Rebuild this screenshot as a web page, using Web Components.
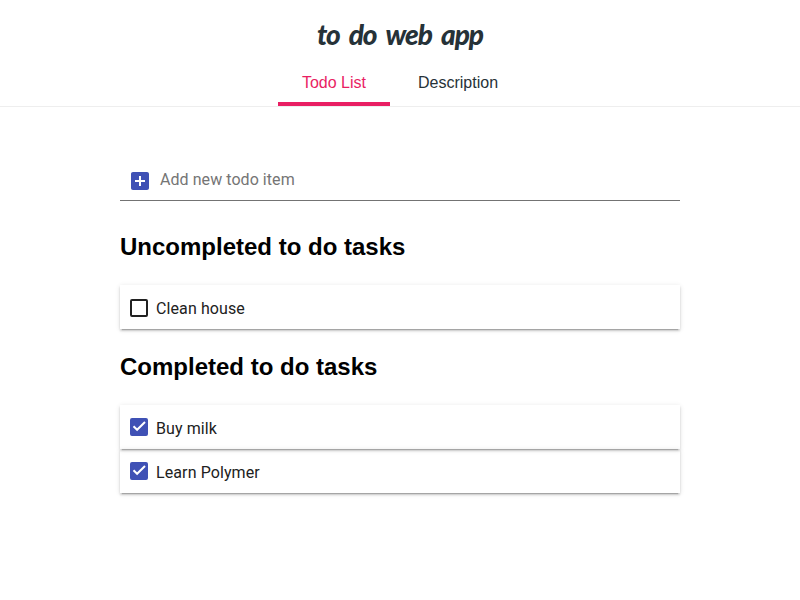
<!DOCTYPE html>
<html lang="en">
<head>
<meta charset="utf-8">
<title>to do web app</title>
<style>body{margin:0;min-height:100vh;background:#fff;font-family:"Liberation Sans",Arial,sans-serif}</style>
</head>
<body>
<todo-app></todo-app>
<script>
const define = (name, html) => customElements.define(name, class extends HTMLElement {
  constructor() {
    super();
    const t = document.createElement('template');
    t.innerHTML = html;
    this.attachShadow({mode: 'open'}).append(t.content.cloneNode(true));
  }
});

define('app-tab', `<style>
:host{display:block;box-sizing:border-box;height:46px;padding:13px 24px 0;font-size:16px;line-height:19px;color:#263238;border-bottom:4px solid transparent;white-space:nowrap}
:host([active]){color:#e91e63;border-color:#e91e63}
</style><slot></slot>`);

define('app-header', `<style>
:host{display:flex;flex-direction:column;align-items:center;box-sizing:border-box;height:107px;border-bottom:1px solid #eee}
h1{margin:0;height:60px;box-sizing:border-box;padding-top:16px;font:italic 900 28px/36px Lato,cursive;letter-spacing:-1px;word-spacing:4px;color:#263238;white-space:nowrap}
nav{display:flex;gap:4px}
</style><h1>to do web app</h1><nav><slot></slot></nav>`);

define('todo-input', `<style>
:host{display:flex;align-items:center;box-sizing:border-box;height:42px;padding-left:8px;border-bottom:1px solid #737373;font:16px/24px Roboto,sans-serif;letter-spacing:.06px;color:#757575}
svg{width:24px;height:24px;fill:#3f51b5;margin:2px 8px 0 0}
</style><svg viewBox="0 0 24 24"><path d="M19 3H5c-1.11 0-2 .9-2 2v14c0 1.100.89 2 2 2h14c1.100 0 2-.9 2-2V5c0-1.100-.9-2-2-2zm-2 10h-4v4h-2v-4H7v-2h4V7h2v4h4v2z"/></svg><slot></slot>`);

define('todo-section', `<style>
:host{display:block}
h2{margin:0 0 24px;font-size:24px;line-height:28px;font-weight:700;color:#000;white-space:nowrap}
</style><h2><slot name="title"></slot></h2><slot></slot>`);

define('todo-item', `<style>
:host{display:flex;box-sizing:border-box;height:44px;padding:14px 10px 0;gap:8px;box-shadow:0 2px 2px 0 rgba(0,0,0,.14),0 1px 5px 0 rgba(0,0,0,.12),0 3px 1px -2px rgba(0,0,0,.2);font:16px/20px Roboto,sans-serif;letter-spacing:.1px;color:#212121}
i{box-sizing:border-box;width:18px;height:18px;border:2px solid #212121;border-radius:2px}
svg{display:none;width:14px;height:14px}
:host([done]) i{background:#3f51b5;border-color:#3f51b5;margin-top:-1px}
:host([done]) svg{display:block}
</style><i><svg viewBox="0 0 14 14"><path d="M1.500 6.300 5.100 9.800 13 2" fill="none" stroke="#fff" stroke-width="2"/></svg></i><span><slot></slot></span>`);

define('todo-app', `<style>
:host{display:block;min-height:100vh}
main{width:560px;margin:52px auto 0}
todo-section{margin-top:24px}
todo-input + todo-section{margin-top:32px}
</style>
<app-header><app-tab active>Todo List</app-tab><app-tab>Description</app-tab></app-header>
<main>
<todo-input>Add new todo item</todo-input>
<todo-section><span slot="title">Uncompleted to do tasks</span><todo-item>Clean house</todo-item></todo-section>
<todo-section><span slot="title">Completed to do tasks</span><todo-item done>Buy milk</todo-item><todo-item done>Learn Polymer</todo-item></todo-section>
</main>`);
</script>
</body>
</html>
